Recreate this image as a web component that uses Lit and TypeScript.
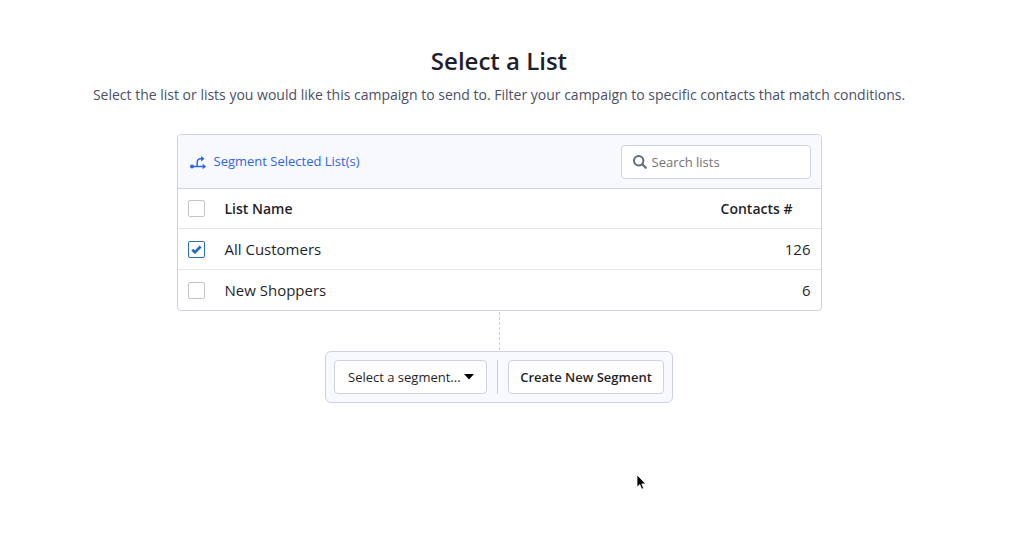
import { LitElement, html, css, svg } from "lit";
import { customElement, state } from "lit/decorators.js";

interface ContactList {
  id: string;
  name: string;
  contacts: number;
}

const LISTS: ContactList[] = [
  { id: "all", name: "All Customers", contacts: 126 },
  { id: "new", name: "New Shoppers", contacts: 6 },
];

const branchIcon = html`<svg class="branch" width="17" height="14" viewBox="0 0 17 14" aria-hidden="true">
  ${svg`<g fill="none" stroke="currentColor" stroke-width="1.5">
    <path d="M2 10.5H14"/>
    <path d="M7.2 10.5V6.6C7.2 4 8.4 2.8 10.6 2.8H12"/>
  </g>
  <circle cx="2" cy="10.5" r="2" fill="currentColor"/>
  <path d="M12.6 7.8L16.2 10.5L12.6 13.2Z" fill="currentColor"/>
  <path d="M11 0.1L14.6 2.8L11 5.5Z" fill="currentColor"/>`}
</svg>`;

const searchIcon = html`<svg class="search-icon" width="14" height="14" viewBox="0 0 14 14" aria-hidden="true">
  ${svg`<circle cx="5.7" cy="5.7" r="4.7" fill="none" stroke="currentColor" stroke-width="2"/>
  <path d="M9.2 9.2L12.8 12.8" stroke="currentColor" stroke-width="2.2" stroke-linecap="round"/>`}
</svg>`;

@customElement("app-root")
export class AppRoot extends LitElement {
  static styles = css`
    :host {
      display: block;
      position: relative;
      min-height: 100vh;
      box-sizing: border-box;
      padding: 44px 30px 40px 0;
      background: #fff;
      color: #1f1f2b;
      font-family: "Open Sans", sans-serif;
      font-size: 13px;
    }
    * {
      box-sizing: border-box;
    }
    .page {
      display: flex;
      flex-direction: column;
      align-items: center;
    }
    .title {
      margin: 0;
      font-size: 24px;
      line-height: 34px;
      font-weight: 600;
    }
    .intro {
      margin: 6px 0 28px;
      font-size: 14px;
      line-height: 22px;
      color: #4a4f66;
      text-align: center;
    }
    .card {
      width: 100%;
      max-width: 645px;
      border: 1px solid #cdd2e2;
      border-radius: 4px;
      overflow: hidden;
    }
    .toolbar {
      display: flex;
      justify-content: space-between;
      align-items: center;
      padding: 10px 10px 9px 12px;
      background: #f8f9fe;
      border-bottom: 1px solid #cdd2e2;
    }
    .segment-link {
      display: flex;
      align-items: flex-start;
      gap: 7px;
      padding-bottom: 2px;
      color: #3066e0;
      text-decoration: none;
      line-height: 20px;
    }
    .branch {
      margin-top: 5px;
    }
    .search {
      display: flex;
      align-items: center;
      gap: 5px;
      width: 190px;
      height: 34px;
      padding: 0 10px 0 11px;
      background: #fff;
      border: 1px solid #cdd2e2;
      border-radius: 4px;
      color: #626a80;
    }
    .search-icon {
      flex: none;
    }
    .search-input {
      flex: 1;
      min-width: 0;
      padding: 0;
      border: 0;
      outline: 0;
      background: none;
      font: inherit;
      color: #1f1f2b;
    }
    .search-input::placeholder {
      color: #737373;
    }
    .lists {
      width: 100%;
      border-collapse: separate;
      border-spacing: 0;
      font-size: 15px;
    }
    .lists th,
    .lists td {
      height: 41px;
      padding: 0 10px;
      border-bottom: 1px solid #e2e5ee;
      text-align: left;
      line-height: 20px;
      font-weight: 400;
    }
    .lists th {
      height: 40px;
      font-size: 14px;
      font-weight: 600;
    }
    .lists tbody tr:last-child td {
      height: 40px;
      border-bottom: 0;
    }
    .lists .pick {
      width: 37px;
      padding-right: 0;
    }
    .lists .count {
      text-align: right;
    }
    .lists th.count {
      padding-right: 28px;
    }
    .box {
      display: block;
      appearance: none;
      width: 17px;
      height: 17px;
      margin: 0;
      background: #fff center / 11px 9px no-repeat;
      border: 1px solid #c4c4c8;
      border-radius: 2px;
    }
    .box:checked {
      border-color: #2b6cb8;
      background-image: url("data:image/svg+xml,%3Csvg xmlns='http://www.w3.org/2000/svg' viewBox='0 0 11 9'%3E%3Cpath d='M1.2 4.7L4 7.2L9.6 1.6' fill='none' stroke='%232b6cb8' stroke-width='2.8'/%3E%3C/svg%3E");
    }
    .connector {
      width: 1px;
      height: 40px;
      margin-left: 1px;
      background: repeating-linear-gradient(to bottom, #fff 0 1px, #cdced4 1px 4px, #fff 4px 5px);
    }
    .segment-panel {
      display: flex;
      gap: 10px;
      padding: 8px;
      background: #f8f9fe;
      border: 1px solid #cdd2e2;
      border-radius: 6px;
    }
    .select-wrap {
      display: grid;
      align-items: center;
    }
    .select-wrap > * {
      grid-area: 1 / 1;
    }
    .segment-select,
    .create {
      height: 34px;
      background: #fff;
      border: 1px solid #cdd2e2;
      border-radius: 4px;
      color: #1f1f2b;
      font: inherit;
    }
    .segment-select {
      appearance: none;
      width: 153px;
      padding: 0 24px 0 13px;
    }
    .caret {
      justify-self: end;
      margin-right: 13px;
      pointer-events: none;
    }
    .divider {
      width: 1px;
      background: #c9cdda;
    }
    .create {
      width: 156px;
      padding: 0;
      font-weight: 600;
    }
    .pointer {
      position: absolute;
      left: 635px;
      top: 473px;
      pointer-events: none;
    }
  `;

  @state() private selected = new Set<string>(["all"]);

  private toggle(id: string) {
    const next = new Set(this.selected);
    if (!next.delete(id)) next.add(id);
    this.selected = next;
  }

  private toggleAll(e: Event) {
    const on = (e.target as HTMLInputElement).checked;
    this.selected = new Set(on ? LISTS.map((l) => l.id) : []);
  }

  render() {
    return html`
      <main class="page">
        <h1 class="title">Select a List</h1>
        <p class="intro">
          Select the list or lists you would like this campaign to send to. Filter your campaign to specific contacts that match conditions.
        </p>
        <section class="card">
          <div class="toolbar">
            <a class="segment-link" href="#segment">${branchIcon}<span>Segment Selected List(s)</span></a>
            <label class="search">
              ${searchIcon}
              <input class="search-input" type="text" placeholder="Search lists" aria-label="Search lists" />
            </label>
          </div>
          <table class="lists">
            <thead>
              <tr>
                <th class="pick">
                  <input class="box" type="checkbox" aria-label="Select all lists"
                    .checked=${this.selected.size === LISTS.length} @change=${this.toggleAll} />
                </th>
                <th>List Name</th>
                <th class="count">Contacts #</th>
              </tr>
            </thead>
            <tbody>
              ${LISTS.map(
                (l) => html`<tr>
                  <td class="pick">
                    <input class="box" type="checkbox" id=${l.id}
                      .checked=${this.selected.has(l.id)} @change=${() => this.toggle(l.id)} />
                  </td>
                  <td><label for=${l.id}>${l.name}</label></td>
                  <td class="count">${l.contacts}</td>
                </tr>`
              )}
            </tbody>
          </table>
        </section>
        <div class="connector"></div>
        <section class="segment-panel" id="segment">
          <div class="select-wrap">
            <select class="segment-select" aria-label="Segment">
              <option>Select a segment...</option>
            </select>
            <svg class="caret" width="10" height="6" viewBox="0 0 10 6" aria-hidden="true">
              <path d="M0 0H10L5 5.5Z" fill="#000" />
            </svg>
          </div>
          <div class="divider"></div>
          <button class="create" type="button">Create New Segment</button>
        </section>
      </main>
      <svg class="pointer" width="13" height="19" viewBox="0 0 13 19" aria-hidden="true">
        <path d="M2 1.8V14.2L4.8 11.6L6.7 16.2L8.7 15.3L6.8 10.9H10.7Z" fill="#000" stroke="#fff" stroke-width="0.8" />
      </svg>
    `;
  }
}
